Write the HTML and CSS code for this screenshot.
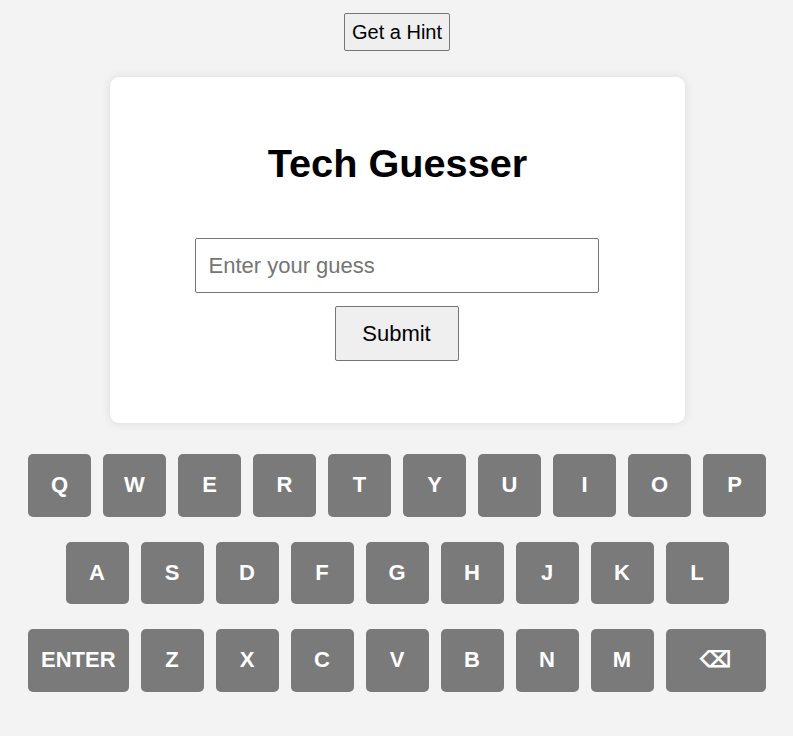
FILE: index.html
```html
<!DOCTYPE html>
<html>
<head>
<meta charset="utf-8">
<link rel="stylesheet" href="styles.css">
</head>
<body>
<div class="top">
  <button class="hint">Get a Hint</button>
</div>
<div class="main">
  <div class="card">
    <h1 class="title">Tech Guesser</h1>
    <div class="form">
      <input class="guess" type="text" placeholder="Enter your guess">
      <button class="submit">Submit</button>
    </div>
  </div>
</div>
<div class="keyboard">
  <div class="row">
    <div class="key">Q</div><div class="key">W</div><div class="key">E</div><div class="key">R</div><div class="key">T</div><div class="key">Y</div><div class="key">U</div><div class="key">I</div><div class="key">O</div><div class="key">P</div>
  </div>
  <div class="row">
    <div class="key">A</div><div class="key">S</div><div class="key">D</div><div class="key">F</div><div class="key">G</div><div class="key">H</div><div class="key">J</div><div class="key">K</div><div class="key">L</div>
  </div>
  <div class="row">
    <div class="key wide">ENTER</div><div class="key">Z</div><div class="key">X</div><div class="key">C</div><div class="key">V</div><div class="key">B</div><div class="key">N</div><div class="key">M</div><div class="key wide">⌫</div>
  </div>
</div>
</body>
</html>
```
FILE: styles.css
```css
html, body {
  margin: 0;
  padding: 0;
}
body {
  background: #f3f3f3;
  font-family: "Liberation Sans", Arial, sans-serif;
}
.top {
  display: flex;
  justify-content: center;
  padding-top: 13px;
  padding-left: 1px;
}
.hint {
  font-family: "Liberation Sans", Arial, sans-serif;
  font-size: 20px;
  width: 106px;
  padding: 6px 0;
  height: 38px;
  background: #efefef;
  border: 1px solid #767676;
  border-radius: 2px;
  color: #000;
}
.main {
  display: flex;
  justify-content: center;
  padding-left: 2px;
  margin-top: 26px;
}
.card {
  width: 575px;
  box-sizing: border-box;
  background: #fff;
  border-radius: 9px;
  box-shadow: 0 0 10px rgba(0, 0, 0, 0.1);
  padding: 63px 0 62px;
  display: flex;
  flex-direction: column;
  align-items: center;
}
.title {
  margin: 0 0 52px;
  font-size: 39.7px;
  line-height: 46px;
  font-weight: bold;
  color: #000;
}
.form {
  display: flex;
  flex-direction: column;
  align-items: center;
  gap: 13px;
  padding-right: 2px;
}
.guess {
  width: 404px;
  height: 55px;
  box-sizing: border-box;
  font-family: "Liberation Sans", Arial, sans-serif;
  font-size: 22px;
  padding: 0 13px;
  border: 1px solid #767676;
  border-radius: 2px;
  background: #fff;
}
.guess::placeholder {
  color: #757575;
}
.submit {
  width: 124px;
  height: 55px;
  box-sizing: border-box;
  font-family: "Liberation Sans", Arial, sans-serif;
  font-size: 22px;
  background: #efefef;
  border: 1px solid #767676;
  border-radius: 2px;
  color: #000;
  padding: 0;
}
.keyboard {
  margin-top: 31px;
  padding-left: 1px;
  display: flex;
  flex-direction: column;
  align-items: center;
  gap: 25px;
}
.row {
  display: flex;
  gap: 12px;
}
.key {
  width: 63px;
  height: 62.5px;
  background: #7a7a7a;
  color: #fff;
  border-radius: 5px;
  display: flex;
  align-items: center;
  justify-content: center;
  font-weight: bold;
  font-size: 22px;
}
.key.wide {
  width: 100.5px;
}
```
